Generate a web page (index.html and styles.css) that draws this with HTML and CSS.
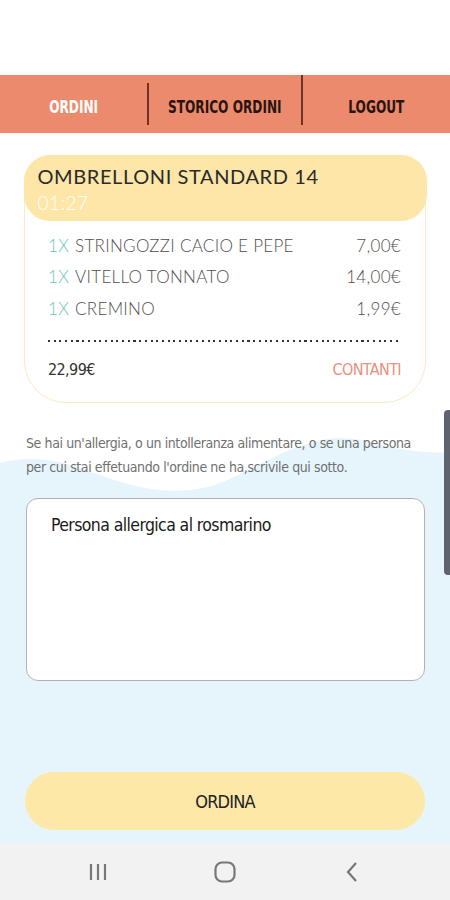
FILE: index.html
```html
<!DOCTYPE html>
<html lang="it">
<head>
    <meta charset="UTF-8">
    <meta name="viewport" content="width=device-width, initial-scale=1.0">
    <title>Ordini</title>
    <link rel="stylesheet" href="styles.css">
</head>
<body>

    <div class="screen">

        <!-- light blue sea behind the lower half -->
        <svg class="sea" viewBox="0 0 450 413" preserveAspectRatio="none">
            <path d="M0 33 C20 28 45 26 80 38 C120 52 150 64 190 60 C230 56 260 30 300 16 C330 6 345 6 370 12 C400 20 425 24 450 22 L450 413 L0 413 Z" fill="#e6f5fb"/>
        </svg>

        <div class="status"></div>

        <!-- top tabs -->
        <nav class="tabs">
            <a class="tab active" href="#"><span>ORDINI</span></a>
            <span class="sep sep-short"></span>
            <a class="tab" href="#"><span>STORICO ORDINI</span></a>
            <span class="sep"></span>
            <a class="tab" href="#"><span>LOGOUT</span></a>
        </nav>

        <main class="content">

            <!-- order card -->
            <section class="card">
                <div class="card-head">
                    <div class="place">OMBRELLONI STANDARD 14</div>
                    <div class="time">01:27</div>
                </div>

                <ul class="items">
                    <li><span class="qty">1X</span><span class="name">STRINGOZZI CACIO E PEPE</span><span class="price">7,00€</span></li>
                    <li><span class="qty">1X</span><span class="name">VITELLO TONNATO</span><span class="price">14,00€</span></li>
                    <li><span class="qty">1X</span><span class="name">CREMINO</span><span class="price">1,99€</span></li>
                </ul>

                <div class="dots"></div>

                <div class="total">
                    <span class="sum">22,99€</span>
                    <span class="pay">CONTANTI</span>
                </div>
            </section>

            <p class="note">Se hai un'allergia, o un intolleranza alimentare, o se una persona per cui stai effetuando l'ordine ne ha,scrivile qui sotto.</p>

            <textarea class="allergy">Persona allergica al rosmarino</textarea>

            <button class="order" type="button">ORDINA</button>
        </main>

        <!-- android buttons -->
        <footer class="sysbar">
            <svg width="24" height="24" viewBox="0 0 24 24"><path d="M5 4v16M12 4v16M19 4v16" stroke="#777" stroke-width="2.2" fill="none"/></svg>
            <svg width="24" height="24" viewBox="0 0 24 24"><rect x="2.5" y="2.5" width="19" height="19" rx="6.5" stroke="#777" stroke-width="2.2" fill="none"/></svg>
            <svg width="24" height="24" viewBox="0 0 24 24"><path d="M16 3L8 12l8 9" stroke="#777" stroke-width="2.2" fill="none"/></svg>
        </footer>

        <div class="scroll"></div>
    </div>

</body>
</html>
```

FILE: styles.css
```css
/* General styling */
body {
    margin: 0;
    padding: 0;
    background-color: #ffffff;
    font-family: 'DejaVu Sans Condensed', 'DejaVu Sans', sans-serif;
}

.screen {
    position: relative;
    width: 450px;
    height: 900px;
    display: flex;
    flex-direction: column;
    overflow: hidden;
}

/* sea wave, sits behind content */
.sea {
    position: absolute;
    left: 0;
    top: 430px;
    width: 450px;
    height: 413px;
    z-index: 0;
}

.status {
    height: 75px;
}

/* Tabs */
.tabs {
    position: relative;
    z-index: 1;
    height: 58px;
    background-color: #ec8a6e;
    display: flex;
    align-items: center;
}

.tab {
    flex: 1;
    text-align: center;
    color: #2a1410;
    font-weight: bold;
    font-size: 18px;
    text-decoration: none;
    padding-top: 4px;
    white-space: nowrap;
}

/* squeeze the letters, the app font is very narrow */
.tab span {
    display: inline-block;
    transform: scaleX(0.75);
}

.tab.active {
    color: #ffffff;
}

.sep {
    width: 2px;
    align-self: flex-start;
    height: 50px;
    background-color: #6b3325;
}

.sep-short {
    margin-top: 8px;
    height: 42px;
}

/* Main */
.content {
    position: relative;
    z-index: 1;
    flex: 1;
    display: flex;
    flex-direction: column;
    padding: 22px 24px 0 24px;
}

.card {
    border: 1.5px solid #fbeac4;
    border-radius: 28px 28px 42px 42px;
    background-color: #ffffff;
    padding-bottom: 20px;
    font-family: 'Lato', 'Open Sans', sans-serif;
    font-weight: 300;
}

.card-head {
    margin: -1.5px -1.5px 0 -1.5px;
    background-color: #fde6a7;
    border-radius: 26px;
    padding: 8px 14px 6px 14px;
}

.place {
    font-size: 20px;
    line-height: 26px;
    letter-spacing: 0.6px;
    color: #2a2a2a;
    font-weight: 400;
}

.time {
    margin-top: 2px;
    font-size: 19px;
    line-height: 24px;
    color: #ffffff;
    letter-spacing: 0.5px;
}

.items {
    list-style: none;
    margin: 0;
    padding: 9px 24px 0 23px;
}

.items li {
    display: flex;
    height: 31.5px;
    align-items: center;
    font-size: 17px;
    color: #505050;
    letter-spacing: 0.3px;
}

.qty {
    color: #6cc5b7;
    margin-right: 6px;
}

.name {
    flex: 1;
}

.dots {
    margin: 16px 24px 0 23px;
    height: 2px;
    background-image: repeating-linear-gradient(to right, #333 0 2px, transparent 2px 5.7px);
}

.total {
    display: flex;
    justify-content: space-between;
    margin: 16px 24px 0 23px;
    line-height: 24px;
    font-family: 'DejaVu Sans Condensed', sans-serif;
    font-size: 16px;
    letter-spacing: -0.6px;
}

.sum {
    color: #333;
}

.pay {
    color: #e9907e;
}

.note {
    margin: 28px 0 0 2px;
    font-size: 14px;
    line-height: 24px;
    letter-spacing: -0.4px;
    color: #707070;
}

.allergy {
    margin: 19px 1px 0 2px;
    height: 183px;
    box-sizing: border-box;
    border: 1.5px solid #b2b2b2;
    border-radius: 12px;
    background-color: #ffffff;
    padding: 16px 24px;
    font-family: 'DejaVu Sans Condensed', sans-serif;
    font-size: 17.5px;
    letter-spacing: -0.6px;
    color: #1a1a1a;
    resize: none;
    outline: none;
}

.order {
    margin: 91px 1px 0 1px;
    height: 58px;
    border: none;
    border-radius: 29px;
    background-color: #fde8a8;
    font-family: 'DejaVu Sans Condensed', sans-serif;
    font-size: 18px;
    letter-spacing: -0.8px;
    color: #222;
    cursor: pointer;
}

/* system nav */
.sysbar {
    position: relative;
    z-index: 1;
    height: 57px;
    background-color: #f2f2f2;
    display: flex;
    justify-content: center;
    align-items: center;
    gap: 103px;
}

.scroll {
    position: absolute;
    z-index: 2;
    right: 0;
    top: 410px;
    width: 6px;
    height: 165px;
    background-color: #5f6370;
    border-radius: 4px 0 0 4px;
}
```
